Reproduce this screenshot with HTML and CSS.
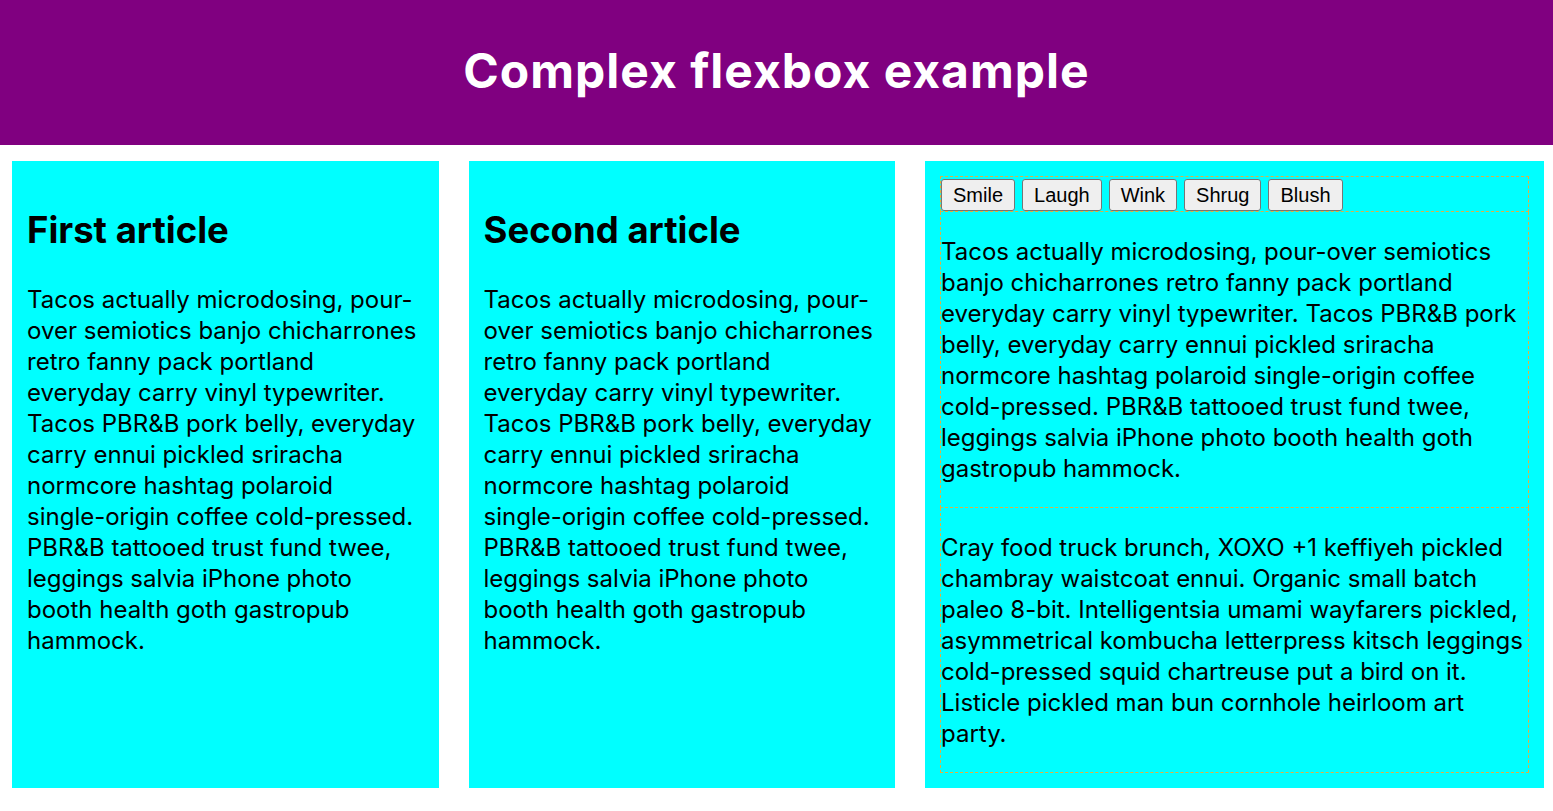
FILE: index.html
```html
<!DOCTYPE html>
<html lang="en">
<head>
  <meta charset="UTF-8">
  <meta name="viewport" content="width=device-width, initial-scale=1.0">
  <title>Complex flexbox example</title>
  <link rel="stylesheet" href="styles.css">
</head>
<body>
  <header>
    <h1>Complex flexbox example</h1>
  </header>

  <section>
    <article>
      <h2>First article</h2>
      <p>Tacos actually microdosing, pour-over semiotics banjo chicharrones retro fanny pack portland everyday carry vinyl typewriter. Tacos PBR&amp;B pork belly, everyday carry ennui pickled sriracha normcore hashtag polaroid <span class="nowrap">single-origin</span> coffee cold-pressed. PBR&amp;B tattooed trust fund twee, leggings salvia iPhone photo booth health goth gastropub hammock.</p>
    </article>

    <article>
      <h2>Second article</h2>
      <p>Tacos actually microdosing, pour-over semiotics banjo chicharrones retro fanny pack portland everyday carry vinyl typewriter. Tacos PBR&amp;B pork belly, everyday carry ennui pickled sriracha normcore hashtag polaroid <span class="nowrap">single-origin</span> coffee cold-pressed. PBR&amp;B tattooed trust fund twee, leggings salvia iPhone photo booth health goth gastropub hammock.</p>
    </article>

    <article class="wide">
      <div class="buttons">
        <button>Smile</button>
        <button>Laugh</button>
        <button>Wink</button>
        <button>Shrug</button>
        <button>Blush</button>
      </div>
      <div class="block">
        <p>Tacos actually microdosing, pour-over semiotics banjo chicharrones retro fanny pack portland everyday carry vinyl typewriter. Tacos PBR&amp;B pork belly, everyday carry ennui pickled sriracha normcore hashtag polaroid single-origin coffee cold-pressed. PBR&amp;B tattooed trust fund twee, leggings salvia iPhone photo booth health goth gastropub hammock.</p>
      </div>
      <div class="block">
        <p>Cray food truck brunch, XOXO +1 keffiyeh pickled chambray waistcoat ennui. Organic small batch paleo 8-bit. Intelligentsia umami wayfarers pickled, asymmetrical kombucha letterpress kitsch leggings cold-pressed squid chartreuse put a bird on it. Listicle pickled man bun cornhole heirloom art party.</p>
      </div>
    </article>
  </section>
</body>
</html>
```
FILE: styles.css
```css
html {
  font-family: Inter, "Noto Sans", sans-serif;
  font-size: 24px;
}
body {
  margin: 0;
}
header {
  background: purple;
  height: 145px;
}
h1 {
  margin: 0;
  padding-bottom: 4px;
  text-align: center;
  color: white;
  font-size: 48px;
  letter-spacing: 1px;
  line-height: 141px;
}
section {
  display: flex;
  gap: 30px;
  padding: 16px 9px 0 12px;
}
article {
  flex: 1 1 0;
  padding: 15px;
  background: aqua;
}
article.wide {
  flex: 1.4855 1 0;
  display: flex;
  flex-direction: column;
}
h2 {
  margin: 30px 0;
  font-size: 36.5px;
  line-height: 48px;
}
p {
  margin: 24px 0;
  line-height: 31px;
}
.nowrap {
  white-space: nowrap;
}
.buttons {
  display: flex;
  gap: 7px;
  padding-top: 2px;
  border: 1px dashed #e2b03e;
}
.block {
  border: 1px dashed #e2b03e;
  border-top: none;
}
.block p {
  margin-bottom: 23px;
}
button {
  height: 32px;
  padding: 3px 11px;
  font-family: "Liberation Sans", Arial, sans-serif;
  font-size: 20px;
  line-height: 24px;
  color: black;
  background: #efefef;
  border: 1px solid #767676;
  border-radius: 3px;
}
```
